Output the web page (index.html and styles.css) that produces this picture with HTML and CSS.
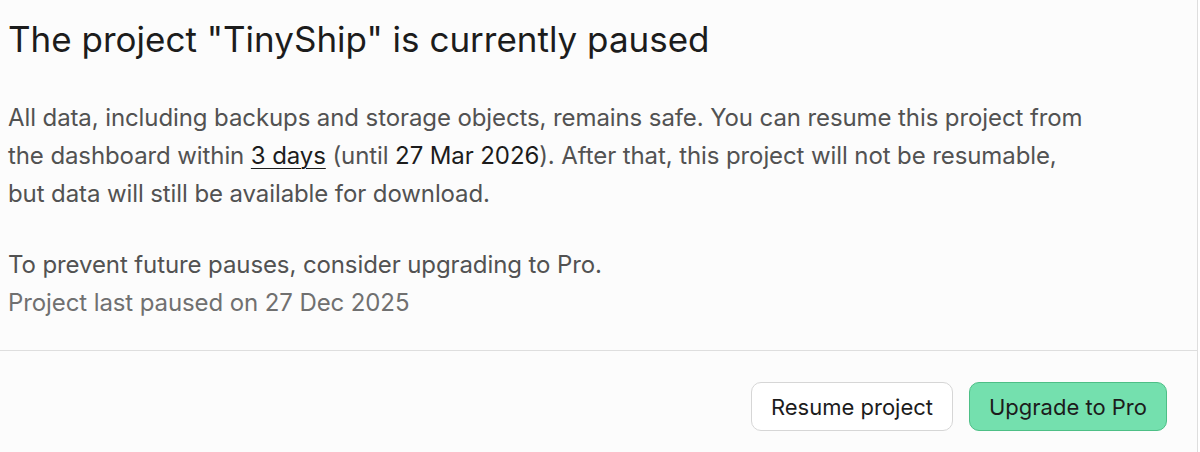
FILE: index.html
```html
<!DOCTYPE html>
<html lang="en">
<head>
<meta charset="utf-8">
<title>Project paused</title>
<link rel="stylesheet" href="styles.css">
</head>
<body>
<div class="panel">
  <div class="content">
    <h2 class="title">The project "TinyShip" is currently paused</h2>
    <p class="text">All data, including backups and storage objects, remains safe. You can resume this project from the dashboard within <span class="days">3 days</span> (until <span class="strong">27 Mar 2026</span>). After that, this project will not be resumable, but data will still be available for download.</p>
    <div class="note">
      <p class="text">To prevent future pauses, consider upgrading to Pro.</p>
      <p class="muted">Project last paused on 27 Dec 2025</p>
    </div>
  </div>
  <div class="footer">
    <button class="btn btn-default" type="button">Resume project</button>
    <button class="btn btn-primary" type="button">Upgrade to Pro</button>
  </div>
</div>
</body>
</html>
```
FILE: styles.css
```css
html, body {
  margin: 0;
  padding: 0;
  background: #ffffff;
}
body {
  font-family: "Inter", "Liberation Sans", sans-serif;
  color: #1c1c1c;
}
.panel {
  width: 1197px;
  height: 452px;
  background: #fcfcfc;
  border-right: 1px solid #dedede;
  display: flex;
  flex-direction: column;
}
.content {
  padding: 14px 100px 0 8px;
  height: 336px;
  border-bottom: 1px solid #dedede;
}
.title {
  margin: 0;
  font-size: 35px;
  line-height: 50px;
  font-weight: 400;
  color: #1c1c1c;
}
.text {
  margin: 35px 0 0 0;
  font-size: 24px;
  line-height: 38px;
  letter-spacing: -0.1px;
  color: #525252;
}
.days {
  color: #1c1c1c;
  text-decoration: underline;
  text-underline-offset: 4px;
  text-decoration-thickness: 1px;
}
.strong {
  color: #1c1c1c;
}
.note {
  margin-top: 33px;
}
.note .text {
  margin: 0;
}
.muted {
  margin: 0;
  font-size: 24px;
  line-height: 38px;
  letter-spacing: -0.1px;
  color: #707070;
}
.footer {
  display: flex;
  justify-content: flex-end;
  gap: 16px;
  padding: 31px 30px 0 0;
}
.btn {
  font-family: inherit;
  font-size: 22px;
  height: 49px;
  padding: 0 16px;
  border-radius: 10px;
  color: #1c1c1c;
  cursor: pointer;
}
.btn-default {
  width: 202px;
  background: #ffffff;
  border: 1.5px solid #d6d6d6;
}
.btn-primary {
  width: 198px;
  background: #74e0ae;
  border: 1.5px solid #4dbf86;
}
```
